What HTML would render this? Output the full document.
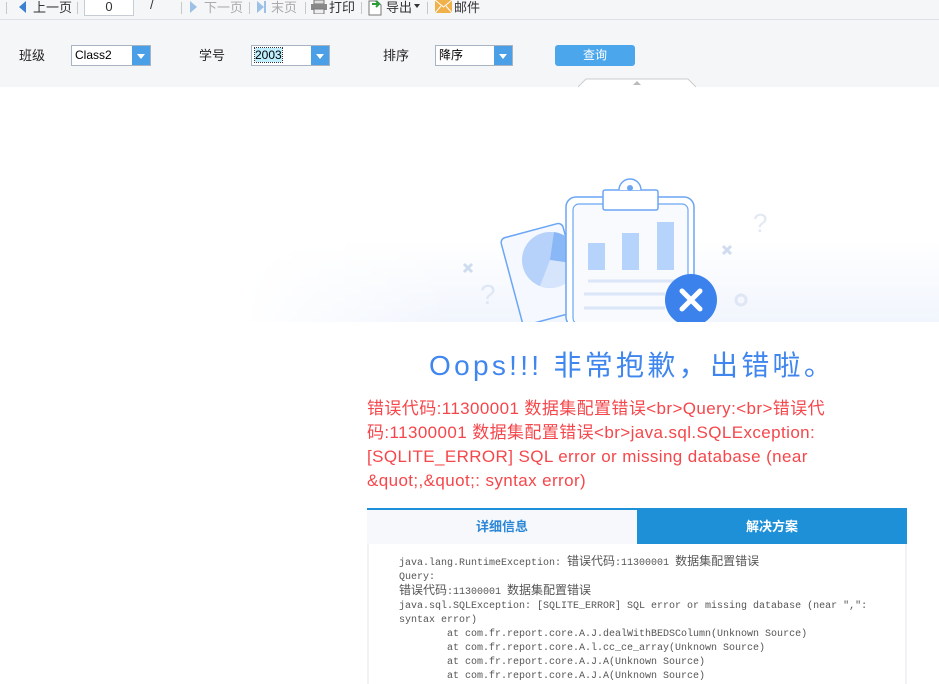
<!DOCTYPE html>
<html><head><meta charset="utf-8"><style>
*{margin:0;padding:0;box-sizing:border-box}
body{width:939px;height:676px;overflow:hidden;background:#fff;font-family:"Liberation Sans","Noto Sans CJK SC",sans-serif;position:relative}
.abs{position:absolute}
.tb{top:0;left:0;width:939px;height:20px;background:#f5f6f8;border-bottom:1px solid #dde0e5;font-size:13px;color:#333}
.tb span{position:absolute;top:-3px;white-space:nowrap}
.sep{position:absolute;top:2px;width:1px;height:12px;background:#c8c8c8}
.pa{top:20px;left:0;width:939px;height:67px;background:#f5f6f8}
.lbl{font-size:13px;color:#222;top:45px}
.sel{height:21px;top:45px;border:1px solid #a8b3c4;background:#fff;font-size:12px;line-height:19px;padding-left:3px}
.sel i{position:absolute;right:0;top:0;width:18px;height:19px;background:#4b9fe6}
.sel i:after{content:"";position:absolute;left:5px;top:8px;border-left:4px solid transparent;border-right:4px solid transparent;border-top:5px solid #fff}
.mono{font-family:"Liberation Mono","Noto Sans CJK SC",monospace;font-size:10px;color:#555;line-height:14px;white-space:pre}
.mono b{font-weight:normal;font-size:12px;font-family:"Noto Sans CJK SC",sans-serif;line-height:10px}
</style></head><body>
<div class="abs tb">
<div class="sep" style="left:6px"></div>
<svg class="abs" style="left:19px;top:1px" width="8" height="12"><path d="M7 0L0 6L7 12Z" fill="#3d7fd0"/></svg>
<span style="left:33px">上一页</span>
<div class="sep" style="left:77px"></div>
<div class="abs" style="left:84px;top:-2px;width:50px;height:18px;background:#fff;border:1px solid #c8ccd4;font-size:13px;text-align:center;line-height:16px">0</div>
<span style="left:150px">/</span>
<div class="sep" style="left:181px"></div>
<svg class="abs" style="left:190px;top:1px" width="8" height="12"><path d="M0 0L7 6L0 12Z" fill="#9cc0e6"/></svg>
<span style="left:204px;color:#aaa">下一页</span>
<div class="sep" style="left:249px"></div>
<svg class="abs" style="left:257px;top:1px" width="10" height="12"><path d="M0 0L7 6L0 12Z" fill="#9cc0e6"/><rect x="7" y="0" width="2" height="12" fill="#9cc0e6"/></svg>
<span style="left:271px;color:#aaa">末页</span>
<div class="sep" style="left:305px"></div>
<svg class="abs" style="left:311px;top:0" width="16" height="14"><rect x="3" y="0" width="10" height="4" fill="#ddd" stroke="#777"/><rect x="0" y="4" width="16" height="6" fill="#888"/><rect x="3" y="9" width="10" height="5" fill="#eee" stroke="#777"/></svg>
<span style="left:329px">打印</span>
<div class="sep" style="left:361px"></div>
<svg class="abs" style="left:368px;top:0" width="14" height="16"><path d="M1 1H9L13 5V15H1Z" fill="#fff" stroke="#777"/><path d="M4 4H11M8 1L11 4L8 7" stroke="#2a9d3a" stroke-width="2" fill="none"/></svg>
<span style="left:386px">导出</span>
<svg class="abs" style="left:414px;top:4px" width="6" height="4"><path d="M0 0H6L3 4Z" fill="#333"/></svg>
<div class="sep" style="left:427px"></div>
<svg class="abs" style="left:435px;top:0" width="17" height="13"><rect width="17" height="13" fill="#f0b04a"/><path d="M0 0L8.5 7L17 0M0 13L6 6M17 13L11 6" stroke="#fff" fill="none"/></svg>
<span style="left:454px">邮件</span>
</div>
<div class="abs pa"></div>
<div class="abs lbl" style="left:19px">班级</div>
<div class="abs sel" style="left:71px;width:80px">Class2<i></i></div>
<div class="abs lbl" style="left:199px">学号</div>
<div class="abs sel" style="left:251px;width:79px"><b style="font-weight:normal;background:#bfefff;outline:1px dotted #333">2003</b><i></i></div>
<div class="abs lbl" style="left:383px">排序</div>
<div class="abs sel" style="left:435px;width:78px">降序<i></i></div>
<div class="abs" style="left:555px;top:45px;width:80px;height:21px;background:#4ba6ec;border-radius:3px;color:#fff;font-size:12px;text-align:center;line-height:21px">查询</div>
<svg class="abs" style="left:578px;top:78px" width="118" height="10"><path d="M0 9L8 1H110L118 9" fill="#fff" stroke="#ccc"/><path d="M55 7L59 3L63 7Z" fill="#bbb"/></svg>

<div class="abs" style="left:240px;top:240px;width:699px;height:82px;background:linear-gradient(to bottom,#fff,#f1f5fd);-webkit-mask:linear-gradient(to right,transparent,#000 30%)"></div>
<svg class="abs" style="left:440px;top:170px" width="360" height="152">
<g fill="none" stroke="#cfdcf0" stroke-width="3"><path d="M24 94l8 8M32 94l-8 8M283 76l8 8M291 76l-8 8"/></g>
<text x="40" y="134" font-size="28" fill="#dfe7f5" font-family="Liberation Sans">?</text>
<text x="313" y="62" font-size="26" fill="#e3e9f4" font-family="Liberation Sans">?</text>
<circle cx="301" cy="130" r="5" fill="none" stroke="#dfe7f4" stroke-width="3"/>
<g transform="rotate(-15 100 110)"><rect x="72" y="60" width="64" height="90" rx="5" fill="#f5f8fe" stroke="#6aa6f5" stroke-width="1.5"/></g>
<circle cx="110" cy="90" r="28" fill="#b6d2fa"/>
<path d="M110 90L114 62A28 28 0 0 1 138 94Z" fill="#8ab7f5"/>
<path d="M110 90L138 94A28 28 0 0 1 100 116Z" fill="#d6e5fc"/>
<rect x="126" y="27" width="128" height="130" rx="10" fill="#fff" stroke="#6aa6f5" stroke-width="1.5"/>
<rect x="133" y="34" width="115" height="120" rx="6" fill="#f8fafe" stroke="#6aa6f5" stroke-width="1.2"/>
<rect x="163" y="20" width="55" height="20" rx="2" fill="#fff" stroke="#6aa6f5" stroke-width="1.5"/>
<path d="M179 20a11 11 0 0 1 22 0" fill="#fff" stroke="#6aa6f5" stroke-width="1.5"/>
<circle cx="190" cy="18" r="3" fill="#6aa6f5"/>
<rect x="148" y="73" width="17" height="27" fill="#b6d4fb"/>
<rect x="182" y="63" width="17" height="37" fill="#b6d4fb"/>
<rect x="217" y="52" width="17" height="48" fill="#b6d4fb"/>
<g stroke="#dbe7f8" stroke-width="3"><path d="M148 111H240M144 124H225M144 138H225"/></g>
<circle cx="251" cy="130" r="26" fill="#3b82ed"/>
<path d="M242 121L260 139M260 121L242 139" stroke="#fff" stroke-width="5" stroke-linecap="round"/>
</svg>

<div class="abs" style="left:429px;top:344px;font-size:28px;letter-spacing:3.3px;color:#3f86ee;white-space:nowrap">Oops!!! 非常抱歉，出错啦。</div>
<div class="abs" style="left:367px;top:397px;font-size:17px;letter-spacing:0.4px;line-height:24px;color:#f5474b;white-space:nowrap">错误代码:11300001 数据集配置错误&lt;br&gt;Query:&lt;br&gt;错误代<br>码:11300001 数据集配置错误&lt;br&gt;java.sql.SQLException:<br>[SQLITE_ERROR] SQL error or missing database (near<br>&amp;quot;,&amp;quot;: syntax error)</div>

<div class="abs" style="left:367px;top:508px;width:540px;height:2px;background:#1e90d8"></div>
<div class="abs" style="left:367px;top:510px;width:270px;height:34px;background:#f6f8fb;color:#2a86d6;font-weight:bold;font-size:13px;text-align:center;line-height:34px">详细信息</div>
<div class="abs" style="left:637px;top:510px;width:270px;height:34px;background:#1e90d8;color:#fff;font-weight:bold;font-size:13px;text-align:center;line-height:34px">解决方案</div>
<div class="abs" style="left:367px;top:544px;width:540px;height:140px;border-left:2px solid #f0f2f6;border-right:2px solid #f0f2f6"></div>
<div class="abs mono" style="left:399px;top:556px">java.lang.RuntimeException: <b>错误代码</b>:11300001 <b>数据集配置错误</b>
Query:
<b>错误代码</b>:11300001 <b>数据集配置错误</b>
java.sql.SQLException: [SQLITE_ERROR] SQL error or missing database (near ",":
syntax error)
        at com.fr.report.core.A.J.dealWithBEDSColumn(Unknown Source)
        at com.fr.report.core.A.l.cc_ce_array(Unknown Source)
        at com.fr.report.core.A.J.A(Unknown Source)
        at com.fr.report.core.A.J.A(Unknown Source)</div>
</body></html>
